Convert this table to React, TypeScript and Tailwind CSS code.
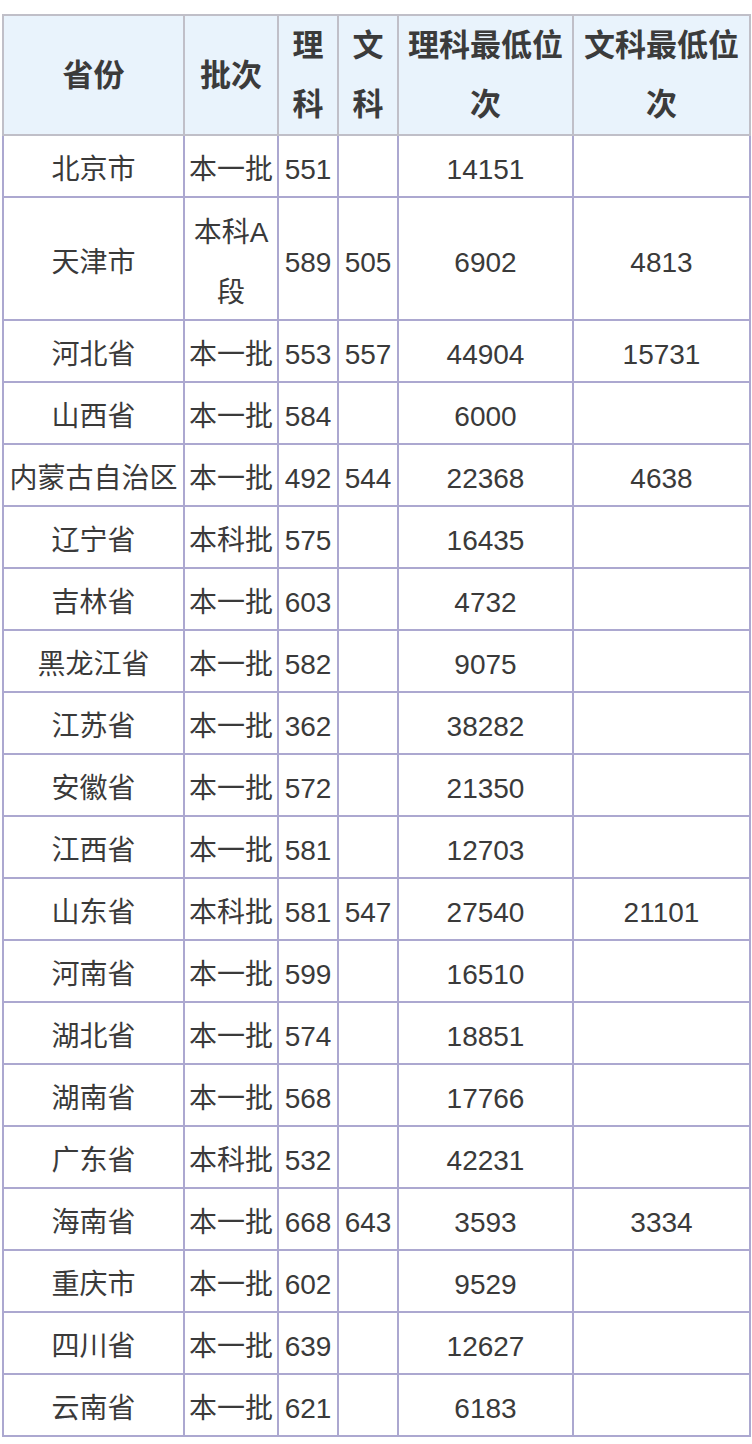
import React from "react";

type Row = [string, string, string, string, string, string];

const rows: Row[] = [
  ["北京市", "本一批", "551", "", "14151", ""],
  ["天津市", "本科A段", "589", "505", "6902", "4813"],
  ["河北省", "本一批", "553", "557", "44904", "15731"],
  ["山西省", "本一批", "584", "", "6000", ""],
  ["内蒙古自治区", "本一批", "492", "544", "22368", "4638"],
  ["辽宁省", "本科批", "575", "", "16435", ""],
  ["吉林省", "本一批", "603", "", "4732", ""],
  ["黑龙江省", "本一批", "582", "", "9075", ""],
  ["江苏省", "本一批", "362", "", "38282", ""],
  ["安徽省", "本一批", "572", "", "21350", ""],
  ["江西省", "本一批", "581", "", "12703", ""],
  ["山东省", "本科批", "581", "547", "27540", "21101"],
  ["河南省", "本一批", "599", "", "16510", ""],
  ["湖北省", "本一批", "574", "", "18851", ""],
  ["湖南省", "本一批", "568", "", "17766", ""],
  ["广东省", "本科批", "532", "", "42231", ""],
  ["海南省", "本一批", "668", "643", "3593", "3334"],
  ["重庆市", "本一批", "602", "", "9529", ""],
  ["四川省", "本一批", "639", "", "12627", ""],
  ["云南省", "本一批", "621", "", "6183", ""],
];

const headers = ["省份", "批次", "理科", "文科", "理科最低位次", "文科最低位次"];

export default function App() {
  return (
    <div
      className="w-[752px] h-[1444px] bg-white pt-[14px] pl-[2px] overflow-hidden"
      style={{ fontFamily: '"Liberation Sans", "Noto Sans CJK SC", sans-serif' }}
    >
      <table className="table-fixed border-collapse w-[747px]">
        <colgroup>
          <col className="w-[181px]" />
          <col className="w-[94px]" />
          <col className="w-[60px]" />
          <col className="w-[60px]" />
          <col className="w-[175px]" />
          <col className="w-[177px]" />
        </colgroup>
        <thead>
          <tr>
            {headers.map((h) => (
              <th
                key={h}
                className="border-2 border-[#c0bfc8] bg-[#e9f3fc] px-[4px] py-0 text-center align-middle text-[31px] leading-[59px] font-bold text-[#3b3b3b] break-all"
              >
                {h}
              </th>
            ))}
          </tr>
        </thead>
        <tbody>
          {rows.map((r, ri) => (
            <tr key={r[0]} className={ri === 1 ? "h-[123px]" : ""}>
              {r.map((c, i) => (
                <td
                  key={i}
                  className="border-2 border-[#aca8d0] px-[4px] py-0 text-center align-middle text-[28px] leading-[60px] text-[#3a3a3a] break-all"
                >
                  <span className="relative top-[4px]">{c}</span>
                </td>
              ))}
            </tr>
          ))}
        </tbody>
      </table>
    </div>
  );
}
